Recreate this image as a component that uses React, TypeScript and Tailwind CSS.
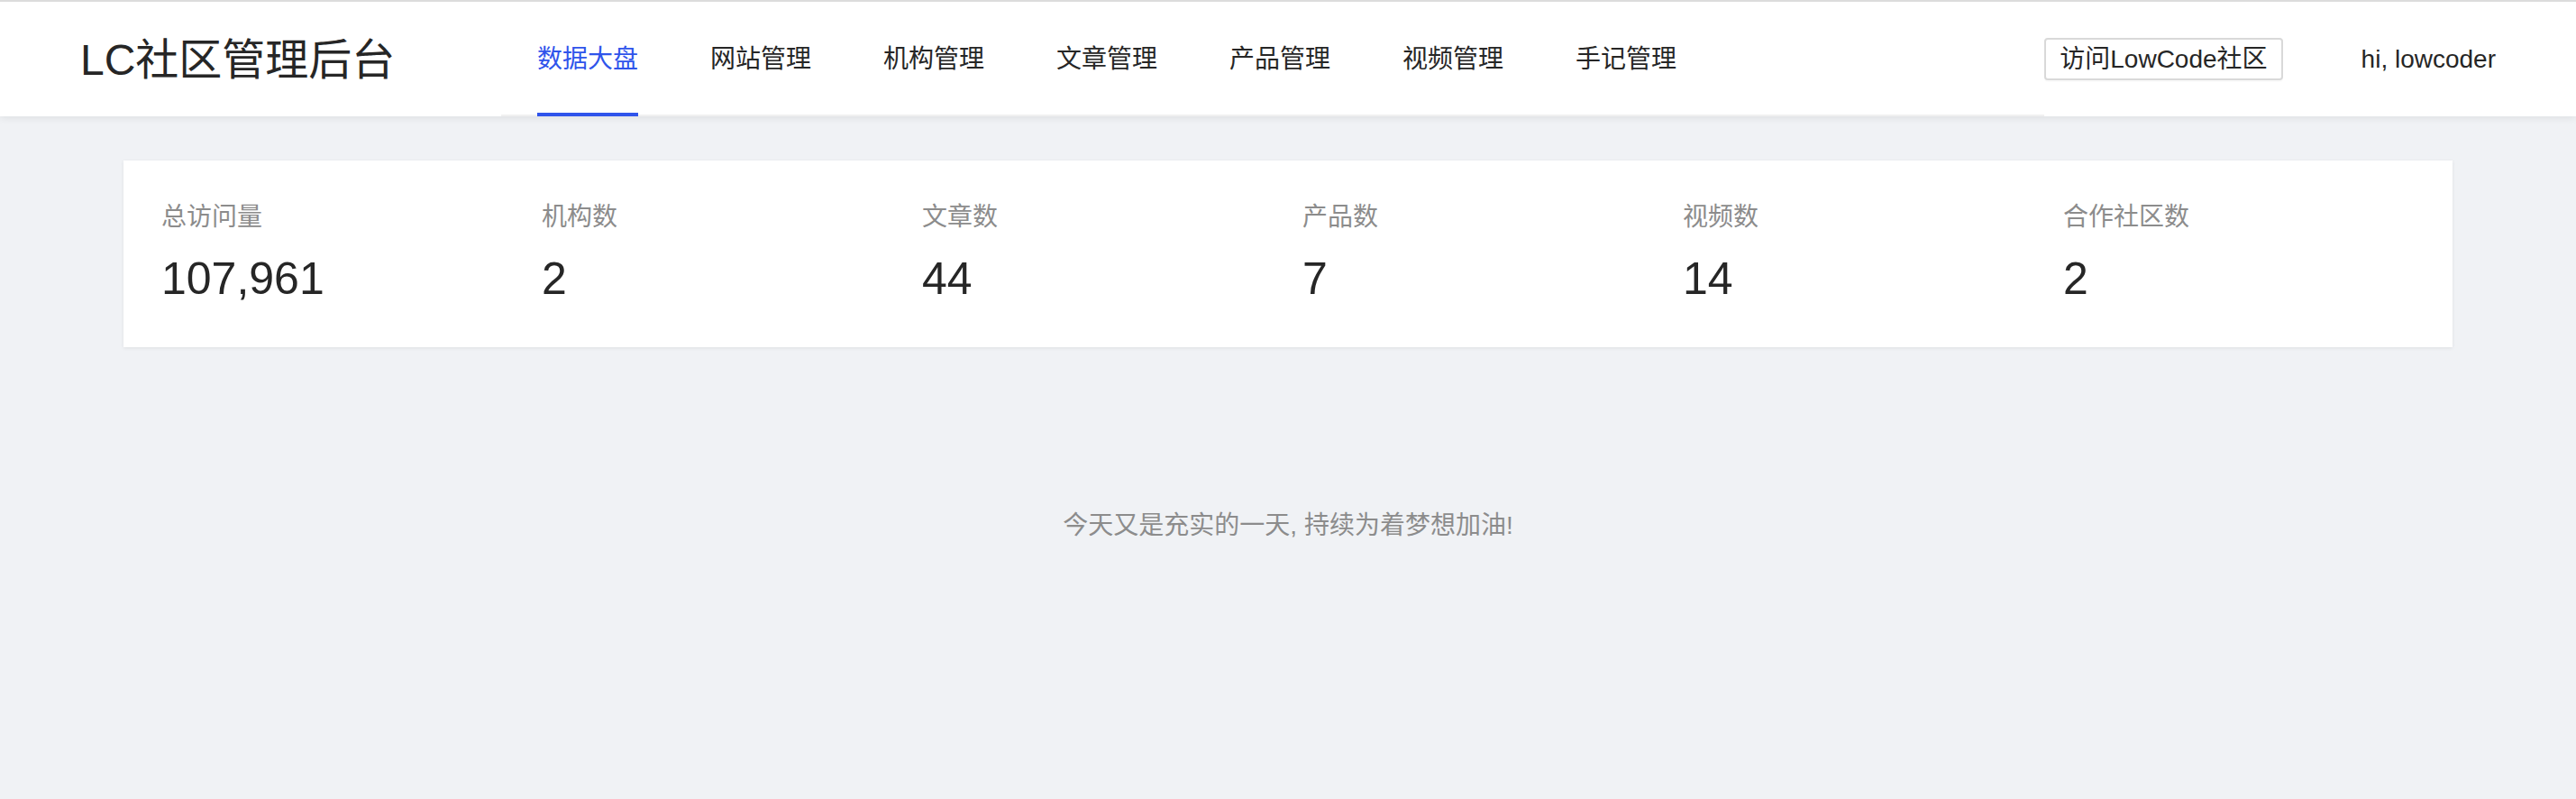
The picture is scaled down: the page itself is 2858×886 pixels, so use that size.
import React from 'react';

const FONT = "font-['Liberation_Sans','Noto_Sans_CJK_SC',sans-serif]";

const navItems = ['数据大盘', '网站管理', '机构管理', '文章管理', '产品管理', '视频管理', '手记管理'];

const stats = [
    { title: '总访问量', value: '107,961' },
    { title: '机构数', value: '2' },
    { title: '文章数', value: '44' },
    { title: '产品数', value: '7' },
    { title: '视频数', value: '14' },
    { title: '合作社区数', value: '2' },
];

function Header() {
    return (
        <header className="relative z-10 h-[129px] border-t-2 border-[#dcdcdc] bg-white shadow-[0_2px_8px_rgba(0,0,0,0.08)] flex items-stretch pl-[89px] pr-[89px]">
            <div className="w-[467px] flex items-center pt-[2px] text-[48px] leading-none text-[#262626]">
                LC社区管理后台
            </div>
            <nav className="flex-1 flex items-stretch border-b-2 border-[#f0f0f0]">
                {navItems.map((item, i) => (
                    <div key={item} className="relative px-[40px] pt-[2px] flex items-center">
                        <span className={i === 0 ? 'text-[28px] text-[#2f54eb]' : 'text-[28px] text-[#262626]'}>
                            {item}
                        </span>
                        {i === 0 && (
                            <span className="absolute left-[40px] right-[40px] -bottom-[2px] h-[4px] bg-[#2f54eb]" />
                        )}
                    </div>
                ))}
            </nav>
            <div className="flex items-center">
                <button className="h-[47px] px-[15px] rounded-[4px] border-2 border-[#d9d9d9] bg-white text-[28px] leading-none text-[#262626] shadow-[0_2px_0_rgba(0,0,0,0.02)]">
                    访问LowCode社区
                </button>
                <span className="ml-[87px] text-[28px] text-[#262626]">hi, lowcoder</span>
            </div>
        </header>
    );
}

function StatsCard() {
    return (
        <div className="mx-[137px] mt-[49px] bg-white shadow-[0_1px_4px_rgba(0,0,0,0.08)] px-[26px] pt-[41px] pb-[46px] grid grid-cols-6">
            {stats.map((s) => (
                <div key={s.title} className="pl-[16px]">
                    <div className="text-[28px] leading-[44px] text-[#8c8c8c]">{s.title}</div>
                    <div className="mt-[16px] text-[50px] leading-[60px] text-[#262626]">{s.value}</div>
                </div>
            ))}
        </div>
    );
}

export default function App() {
    return (
        <div className={`min-h-[886px] bg-[#f0f2f5] ${FONT}`}>
            <Header />
            <StatsCard />
            <p className="mt-[176px] text-center text-[28px] leading-[44px] text-[#8c8c8c]">
                今天又是充实的一天, 持续为着梦想加油!
            </p>
        </div>
    );
}
